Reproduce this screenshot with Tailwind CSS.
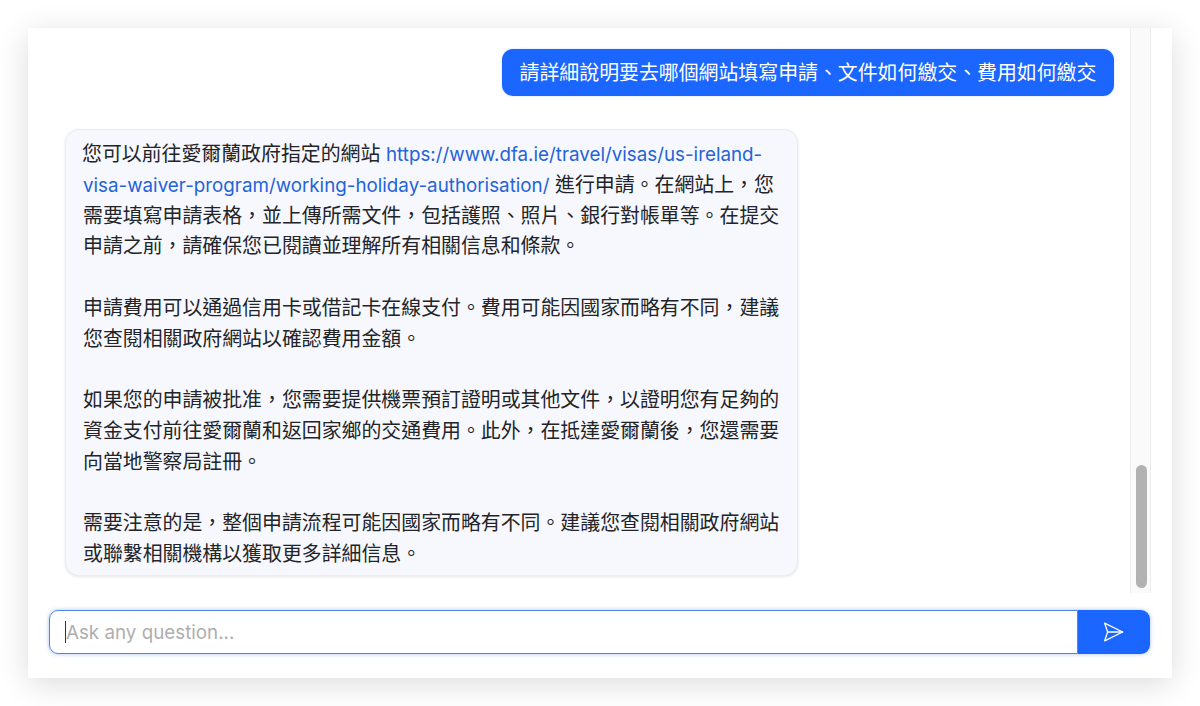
<!DOCTYPE html>
<html lang="zh-Hant">
<head>
<meta charset="utf-8">
<script src="https://cdn.jsdelivr.net/npm/@tailwindcss/browser@4"></script>
</head>
<body class="m-0 bg-white">
<div class="w-[1200px] h-[706px] pt-[28px] px-[28px] bg-white overflow-hidden font-['Inter','Noto_Sans_CJK_TC',sans-serif]">
  <div class="w-[1144px] h-[650px] bg-white flex flex-col shadow-[0_6px_30px_rgba(0,0,0,0.14)]">
    <div class="flex h-[565px] pr-[21px]">
      <div class="flex-1 flex flex-col">
        <div class="flex justify-end pt-[21px] pr-[16px]">
          <div class="h-[47px] w-[612px] flex items-center justify-center pt-[2px] rounded-[11px] bg-[#1a66ff] text-white text-[19.9px] whitespace-nowrap shadow-[0_0_2px_rgba(26,102,255,0.3)]">請詳細說明要去哪個網站填寫申請、文件如何繳交、費用如何繳交</div>
        </div>
        <div class="mt-[33px] ml-[37px] w-[733px] h-[447px] rounded-[14px] border border-[#ebecf2] bg-[#f6f8fe] pl-[17px] pt-[9px] text-[19.9px] leading-[30.75px] text-[#222428] whitespace-nowrap shadow-[0_1px_3px_rgba(0,0,0,0.1)]">
          <span class="ml-[-1px]">您可以前往愛爾蘭政府指定的網站</span> <a class="text-[18.8px] leading-none text-[#2563d8]">https://www.dfa.ie/travel/visas/us-ireland-</a><br>
          <a class="text-[18.8px] leading-none text-[#2563d8]">visa-waiver-program/working-holiday-authorisation/</a> 進行申請。在網站上，您<br>
          需要填寫申請表格，並上傳所需文件，包括護照、照片、銀行對帳單等。在提交<br>
          申請之前，請確保您已閱讀並理解所有相關信息和條款。<br><br>
          申請費用可以通過信用卡或借記卡在線支付。費用可能因國家而略有不同，建議<br>
          您查閱相關政府網站以確認費用金額。<br><br>
          如果您的申請被批准，您需要提供機票預訂證明或其他文件，以證明您有足夠的<br>
          資金支付前往愛爾蘭和返回家鄉的交通費用。此外，在抵達愛爾蘭後，您還需要<br>
          向當地警察局註冊。<br><br>
          需要注意的是，整個申請流程可能因國家而略有不同。建議您查閱相關政府網站<br>
          或聯繫相關機構以獲取更多詳細信息。
        </div>
      </div>
      <div class="w-[21px] h-full bg-[#fafafa] border-x border-[#ececec] pl-[5px] pt-[437px]">
        <div class="w-[11px] h-[123px] rounded-full bg-[#b2b2b2]"></div>
      </div>
    </div>
    <div class="flex mt-[17px] ml-[21px] w-[1101px] h-[44px] shadow-[0_0_4px_rgba(37,99,235,0.4)] rounded-[9px]">
      <div class="flex-1 flex items-center relative rounded-l-[9px] border-[1.5px] border-[#4f86e0] bg-white pl-[16px] pt-[3px] text-[18.8px] text-[#aeaeae]">
        <span class="absolute left-[15px] top-[10px] w-px h-[22px] bg-[#333]"></span>
        <span>Ask any question...</span>
      </div>
      <div class="w-[72px] flex items-center justify-center rounded-r-[9px] bg-[#1a66ff]">
        <svg class="w-[20px] h-[20px] text-white" fill="none" viewBox="0 0 20 20" stroke="currentColor" stroke-width="1.3" stroke-linejoin="round" stroke-linecap="round">
          <path d="M0.7 1.2 L18.6 10 L0.7 18.8 L3.6 10 Z"/>
          <path d="M3.6 10 L18.6 10"/>
        </svg>
      </div>
    </div>
  </div>
</div>
</body>
</html>
